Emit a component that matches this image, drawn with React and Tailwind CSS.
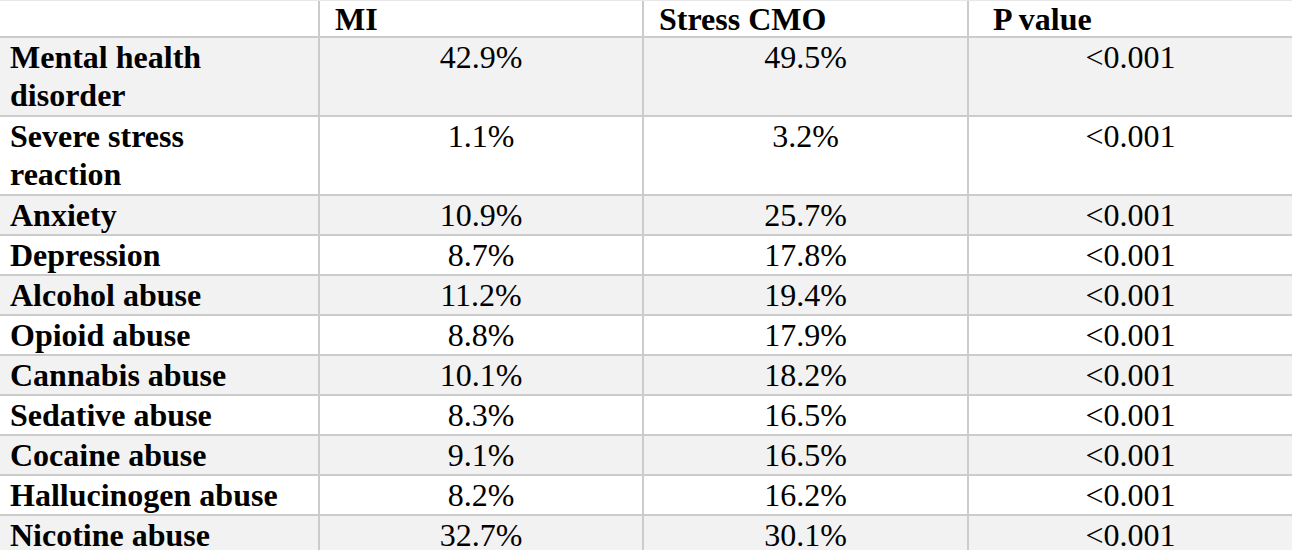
import React from 'react';

// rows: label lines, MI, Stress CMO, p value
const rows = [
  { label: ["Mental health", "disorder"], mi: "42.9%", cmo: "49.5%", p: "<0.001" },
  { label: ["Severe stress", "reaction"], mi: "1.1%", cmo: "3.2%", p: "<0.001" },
  { label: ["Anxiety"], mi: "10.9%", cmo: "25.7%", p: "<0.001" },
  { label: ["Depression"], mi: "8.7%", cmo: "17.8%", p: "<0.001" },
  { label: ["Alcohol abuse"], mi: "11.2%", cmo: "19.4%", p: "<0.001" },
  { label: ["Opioid abuse"], mi: "8.8%", cmo: "17.9%", p: "<0.001" },
  { label: ["Cannabis abuse"], mi: "10.1%", cmo: "18.2%", p: "<0.001" },
  { label: ["Sedative abuse"], mi: "8.3%", cmo: "16.5%", p: "<0.001" },
  { label: ["Cocaine abuse"], mi: "9.1%", cmo: "16.5%", p: "<0.001" },
  { label: ["Hallucinogen abuse"], mi: "8.2%", cmo: "16.2%", p: "<0.001" },
  { label: ["Nicotine abuse"], mi: "32.7%", cmo: "30.1%", p: "<0.001" },
];

const App = () => {
  return (
    <div
      className="w-[1292px] h-[550px] overflow-hidden bg-white text-black text-[32px] leading-[38px]"
      style={{ fontFamily: '"Liberation Serif", "Times New Roman", serif' }}
    >
      {/* header */}
      <div className="flex h-[38px] border-t border-t-[#e8e8e8] border-b-2 border-b-[#cccccc] font-bold">
        <div className="w-[320px] shrink-0 border-r-2 border-r-[#cccccc]" />
        <div className="w-[324px] shrink-0 border-r-2 border-r-[#cccccc] pl-[15px] leading-[36px]">MI</div>
        <div className="w-[325px] shrink-0 border-r-2 border-r-[#cccccc] pl-[15px] leading-[36px]">Stress CMO</div>
        <div className="flex-1 pl-[24px] leading-[36px]">P value</div>
      </div>

      {rows.map((r, i) => (
        <div
          key={i}
          className={`flex border-b-2 border-b-[#cccccc] ${r.label.length > 1 ? "h-[79px]" : "h-[40px]"} ${i % 2 === 0 ? "bg-[#f2f2f2]" : "bg-white"}`}
        >
          <div className="w-[320px] shrink-0 border-r-2 border-r-[#cccccc] pl-[10px] font-bold whitespace-nowrap">
            {r.label.map((line, j) => (
              <div key={j}>{line}</div>
            ))}
          </div>
          <div className="w-[324px] shrink-0 border-r-2 border-r-[#cccccc] text-center">{r.mi}</div>
          <div className="w-[325px] shrink-0 border-r-2 border-r-[#cccccc] text-center">{r.cmo}</div>
          <div className="flex-1 text-center">{r.p}</div>
        </div>
      ))}
    </div>
  );
};

export default App;
